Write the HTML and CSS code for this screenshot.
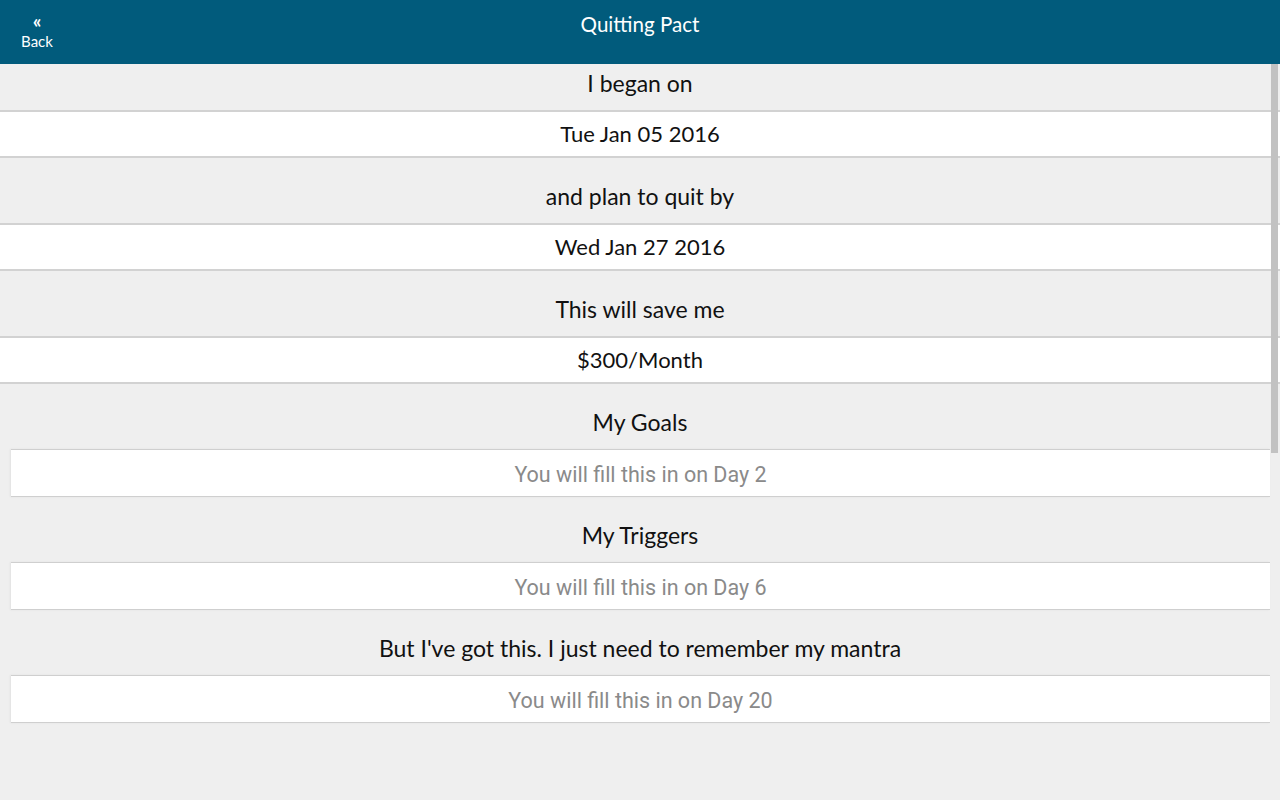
FILE: index.html
```html
<!DOCTYPE html>
<html>
<head>
<meta charset="utf-8">
<link rel="stylesheet" href="styles.css">
</head>
<body>
<header class="topbar">
  <div class="back">
    <span class="back-icon">«</span>
    <span class="back-text">Back</span>
  </div>
  <h1 class="title">Quitting Pact</h1>
</header>
<main class="content">
  <section class="group first">
    <div class="label">I began on</div>
    <div class="value full">Tue Jan 05 2016</div>
  </section>
  <section class="group">
    <div class="label">and plan to quit by</div>
    <div class="value full">Wed Jan 27 2016</div>
  </section>
  <section class="group">
    <div class="label">This will save me</div>
    <div class="value full">$300/Month</div>
  </section>
  <section class="group">
    <div class="label">My Goals</div>
    <div class="value inset placeholder">You will fill this in on Day 2</div>
  </section>
  <section class="group">
    <div class="label">My Triggers</div>
    <div class="value inset placeholder">You will fill this in on Day 6</div>
  </section>
  <section class="group">
    <div class="label">But I've got this. I just need to remember my mantra</div>
    <div class="value inset placeholder">You will fill this in on Day 20</div>
  </section>
  <div class="scrollbar"></div>
</main>
</body>
</html>
```
FILE: styles.css
```css
html, body {
  margin: 0;
  padding: 0;
  height: 100%;
  background: #efefef;
}
body {
  font-family: Lato, "Liberation Sans", sans-serif;
  color: #111;
  overflow: hidden;
}
.topbar {
  height: 64px;
  background: #015b7c;
  color: #fff;
  position: relative;
  display: flex;
  align-items: center;
  justify-content: center;
}
.back {
  position: absolute;
  left: 15px;
  top: 11px;
  width: 44px;
  display: flex;
  flex-direction: column;
  align-items: center;
}
.back-icon {
  font-size: 19px;
  line-height: 20px;
  font-weight: bold;
}
.back-text {
  font-size: 15px;
  line-height: 20px;
}
.title {
  margin: 0;
  font-weight: normal;
  font-size: 20.6px;
  line-height: 28px;
  margin-top: -16px;
}
.content {
  position: relative;
}
.group {
  margin-top: 19px;
}
.group.first {
  margin-top: 0;
}
.label {
  height: 46px;
  display: flex;
  align-items: center;
  justify-content: center;
  font-size: 23px;
  padding-bottom: 8px;
  box-sizing: border-box;
}
.value {
  height: 48px;
  box-sizing: border-box;
  background: #fff;
  border-top: 2px solid #d2d2d2;
  border-bottom: 2px solid #d2d2d2;
  display: flex;
  align-items: center;
  justify-content: center;
  font-size: 22px;
  padding-bottom: 1px;
}
.value.inset {
  margin-left: 11px;
  margin-right: 10px;
  border-top-width: 1px;
  border-bottom-width: 1px;
  border-color: #cfcfcf;
  box-shadow: -1px 0 2px rgba(0,0,0,0.06);
  padding-bottom: 0;
  padding-top: 2px;
}
.placeholder {
  font-family: Roboto, "Liberation Sans", sans-serif;
  color: #8a8a8a;
  font-size: 21.5px;
}
.scrollbar {
  position: absolute;
  top: 0;
  right: 2px;
  width: 7px;
  height: 389px;
  background: #c2c2c2;
}
```
